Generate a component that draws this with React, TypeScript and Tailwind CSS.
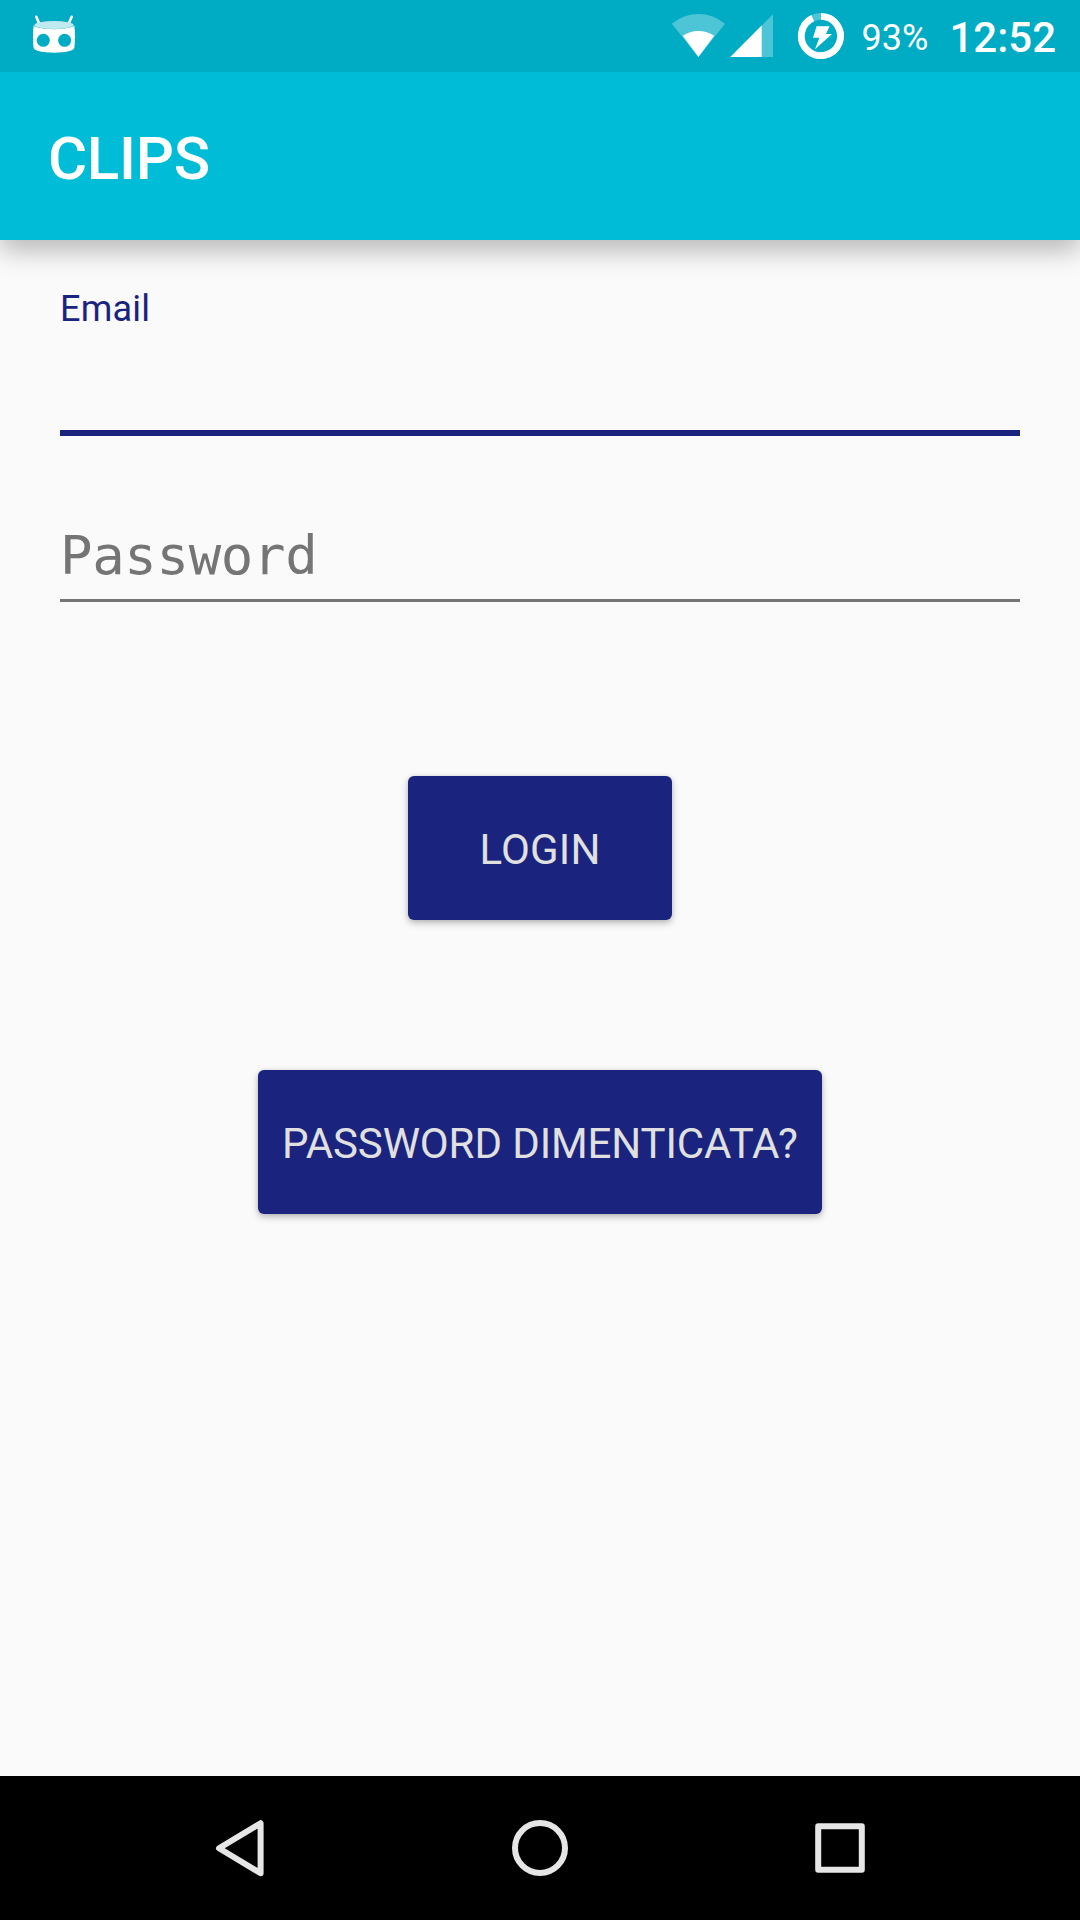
function RobotIcon() {
  return (
    <svg className="h-[72px] w-[46px]" viewBox="31 0 46 72">
      <path d="M36.3 16.8 39 23M71.7 16.8 69 23" stroke="white" strokeWidth="2.6" strokeLinecap="round" />
      <path
        d="M33.8 25.3C36 30.4 72 30.4 74.2 25.3C75.3 31 75.2 42 74.3 48C73.4 54.2 34.6 54.2 33.7 48C32.8 42 32.7 31 33.8 25.3Z"
        fill="white"
      />
      <ellipse cx="54" cy="25" rx="19.6" ry="4" fill="#bfeaf0" />
      <circle cx="43.3" cy="40.3" r="6.5" fill="#00acc4" />
      <circle cx="64.6" cy="40.3" r="6.5" fill="#00acc4" />
    </svg>
  );
}

function WifiIcon() {
  return (
    <svg className="h-[72px] w-[54px]" viewBox="671 0 54 72">
      <path d="M698.4 57 671.8 23.7Q683.5 14 698.4 14T725 23.7Z" fill="white" fillOpacity="0.3" />
      <path d="M698.4 57 682.8 35.8Q689.5 31 698.4 31T714.2 35.8Z" fill="white" />
    </svg>
  );
}

function SignalIcon() {
  return (
    <svg className="ml-[5px] h-[72px] w-[43px]" viewBox="730 0 43 72">
      <path d="M730.3 57 773 14.3V57Z" fill="white" fillOpacity="0.3" />
      <path d="M730.3 57 761.7 25.6V57Z" fill="white" />
    </svg>
  );
}

function BatteryIcon() {
  return (
    <svg className="ml-6 h-[72px] w-[48px]" viewBox="797 0 48 72" fill="none">
      <circle cx="821" cy="36" r="19.6" stroke="white" strokeOpacity="0.3" strokeWidth="6.8" />
      <path d="M821 16.4A19.6 19.6 0 1 1 812.7 18.2" stroke="white" strokeWidth="6.8" />
      <path d="M816.6 26.2H829.6L826 34H832L815 49.3 819.4 37.8H813Z" fill="white" />
    </svg>
  );
}

function StatusBar() {
  return (
    <header className="relative z-10 flex h-[72px] items-center justify-between bg-[#00acc4] pl-[31px] pr-6 text-white">
      <RobotIcon />
      <div className="flex items-center">
        <WifiIcon />
        <SignalIcon />
        <BatteryIcon />
        <span className="ml-[17px] mt-1 text-[36px] leading-[48px]">93%</span>
        <span className="ml-[21px] mt-1 text-[42px] font-medium leading-[48px]">12:52</span>
      </div>
    </header>
  );
}

function ActionButton({ label, className }: { label: string; className: string }) {
  return (
    <button
      className={
        "flex h-36 items-center justify-center whitespace-nowrap rounded-[6px] bg-[#1a237e] pt-[3px] text-[42px] leading-[48px] text-[#e0e0e0] shadow-[0_3px_7px_rgba(0,0,0,0.26),0_0_4px_rgba(0,0,0,0.08)] " +
        className
      }
    >
      {label}
    </button>
  );
}

function NavBar() {
  return (
    <nav className="flex h-36 items-center justify-center gap-[236px] bg-black" aria-label="System">
      <svg className="size-16" viewBox="0 0 64 64" fill="none" stroke="#e6e6e6" strokeWidth="6" strokeLinejoin="round">
        <path d="M11 32.2 52.6 7.2V57.2Z" />
      </svg>
      <svg className="size-16" viewBox="0 0 64 64" fill="none" stroke="#e6e6e6" strokeWidth="6">
        <circle cx="32" cy="32" r="25" />
      </svg>
      <svg className="size-16" viewBox="0 0 64 64" fill="none" stroke="#e6e6e6" strokeWidth="6" strokeLinejoin="round">
        <rect x="10.2" y="10.2" width="43.6" height="43.6" />
      </svg>
    </nav>
  );
}

export default function App() {
  return (
    <div className="flex h-[1920px] w-[1080px] flex-col overflow-hidden bg-[#fafafa] font-['Roboto',sans-serif]">
      <StatusBar />
      <div className="flex h-[168px] items-center bg-[#00bcd6] pl-12 pt-[5px] shadow-[0_11px_24px_rgba(0,0,0,0.26)]">
        <h1 className="text-[60px] font-medium leading-[72px] tracking-[-0.3px] text-white">CLIPS</h1>
      </div>
      <main className="flex flex-1 flex-col items-center px-[60px]">
        <div className="h-[196px] w-full border-b-[6px] border-[#1a237e] pt-[45px]">
          <label className="block text-[36px] leading-[48px] tracking-[0.2px] text-[#1a237e]">Email</label>
        </div>
        <div className="mt-[84px] h-[82px] w-full border-b-[3px] border-[#757575]">
          <label className="block pt-1 font-['DejaVu_Sans_Mono',monospace] text-[54px] leading-[64px] tracking-[-0.35px] text-[#757575]">
            Password
          </label>
        </div>
        <ActionButton label="LOGIN" className="mt-[174px] w-[264px] tracking-[0.2px]" />
        <ActionButton label="PASSWORD DIMENTICATA?" className="mt-[150px] w-[564px] tracking-[-0.1px]" />
      </main>
      <NavBar />
    </div>
  );
}
